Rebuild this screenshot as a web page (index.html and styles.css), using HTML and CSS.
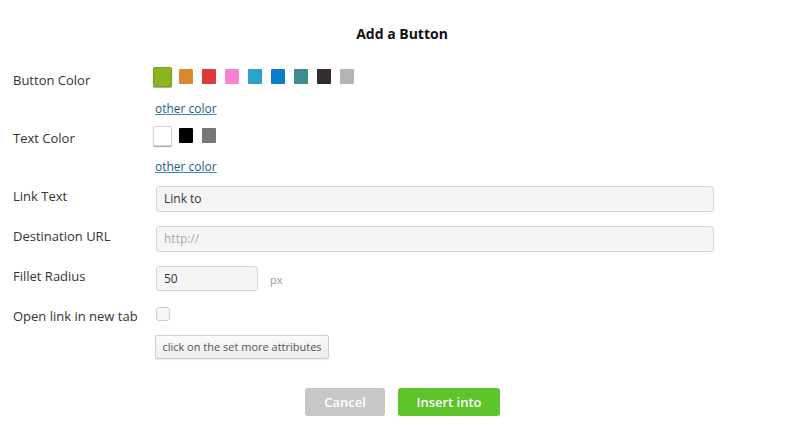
FILE: index.html
```html
<!DOCTYPE html>
<html>
<head>
<meta charset="utf-8">
<link rel="stylesheet" href="styles.css">
</head>
<body>
<div class="dialog">
  <h1 class="title">Add a Button</h1>

  <div class="row row-bcolor">
    <div class="label">Button Color</div>
    <div class="control">
      <div class="swatches">
        <span class="swatch selected" style="background:#8db31e"></span>
        <span class="swatch" style="background:#d8892c"></span>
        <span class="swatch" style="background:#da3a3a"></span>
        <span class="swatch" style="background:#f684d3"></span>
        <span class="swatch" style="background:#2aa4cd"></span>
        <span class="swatch" style="background:#0b7ccb"></span>
        <span class="swatch" style="background:#3f8c8f"></span>
        <span class="swatch" style="background:#332d31"></span>
        <span class="swatch" style="background:#b4b4b4"></span>
      </div>
      <a class="other" href="#">other color</a>
    </div>
  </div>

  <div class="row row-tcolor">
    <div class="label">Text Color</div>
    <div class="control">
      <div class="swatches">
        <span class="swatch selected white" style="background:#ffffff"></span>
        <span class="swatch" style="background:#000000"></span>
        <span class="swatch" style="background:#777777"></span>
      </div>
      <a class="other tight" href="#">other color</a>
    </div>
  </div>

  <div class="row row-field first-field">
    <div class="label">Link Text</div>
    <div class="control"><div class="input wide">Link to</div></div>
  </div>

  <div class="row row-field">
    <div class="label">Destination URL</div>
    <div class="control"><div class="input wide placeholder">http://</div></div>
  </div>

  <div class="row row-field">
    <div class="label">Fillet Radius</div>
    <div class="control inline"><div class="input small">50</div><span class="unit">px</span></div>
  </div>

  <div class="row row-check">
    <div class="label">Open link in new tab</div>
    <div class="control"><span class="checkbox"></span></div>
  </div>

  <div class="row row-more">
    <div class="label"></div>
    <div class="control"><button class="more">click on the set more attributes</button></div>
  </div>

  <div class="footer">
    <button class="btn cancel">Cancel</button>
    <button class="btn insert">Insert into</button>
  </div>
</div>
</body>
</html>
```

FILE: styles.css
```css
* { box-sizing: border-box; }
html, body { margin: 0; padding: 0; background: #ffffff; }
body {
  font-family: "Open Sans", "DejaVu Sans", sans-serif;
  color: #333333;
  width: 800px;
  height: 425px;
  overflow: hidden;
}
.dialog { padding: 24px 0 0 13px; }
.title {
  margin: 0 0 0 -13px;
  padding-left: 4px;
  font-size: 14px;
  font-weight: 700;
  line-height: 20px;
  text-align: center;
  color: #111111;
}
.row {
  display: grid;
  grid-template-columns: 142px 560px;
}
.label {
  font-size: 13px;
  line-height: 18px;
  color: #333333;
}
.row-bcolor { margin-top: 22px; }
.row-bcolor .label { padding-top: 5px; }
.row-tcolor .label { padding-top: 4px; }
.row-tcolor { margin-top: 8px; }
.swatches {
  display: flex;
  align-items: center;
  height: 21px;
  margin-left: -2px;
}
.swatch {
  display: block;
  width: 14px;
  height: 15px;
  margin-right: 9px;
  border-radius: 1px;
}
.swatch.selected {
  width: 19px;
  height: 20px;
  margin-right: 7px;
  border: 1px solid rgba(0,0,0,0.12);
  box-shadow: 0 1px 1px rgba(0,0,0,0.35);
  border-radius: 2px;
}
.swatch.white { border-color: #d4d4d4; }
.other {
  display: block;
  margin-top: 14px;
  font-size: 12px;
  line-height: 16px;
  color: #1d5d7e;
  text-decoration: underline;
  text-decoration-color: #3b8fb0;
  width: max-content;
}
.other.tight { margin-top: 13px; margin-bottom: 1px; }
.row-field { margin-top: 14px; }
.first-field { margin-top: 10px; }
.row-field .label { padding-top: 1px; }
.input {
  height: 26px;
  margin-left: 1px;
  border: 1px solid #d6d6d6;
  border-radius: 3px;
  background: #f5f5f5;
  font-size: 12px;
  line-height: 24px;
  padding-left: 7px;
  color: #333333;
}
.input.wide { width: 558px; }
.input.small { width: 102px; height: 25px; line-height: 23px; }
.input.placeholder { color: #aaaaaa; }
.inline { display: flex; align-items: center; }
.unit { margin-left: 12px; font-size: 11px; color: #999999; margin-top: 1px; }
.row-check { margin-top: 14px; }
.row-check .label { padding-top: 2px; }
.checkbox {
  display: block;
  width: 14px;
  height: 14px;
  margin: 2px 0 0 1px;
  border: 1px solid #cccccc;
  border-radius: 3px;
  background: #f7f7f7;
}
.row-more { margin-top: 10px; }
.more {
  display: block;
  width: 174px;
  height: 24px;
  margin: 0;
  padding: 0;
  border: 1px solid #cfcfcf;
  border-radius: 2px;
  background: linear-gradient(#fbfbfb, #ececec);
  box-shadow: 0 1px 1px rgba(0,0,0,0.08);
  font-family: "Open Sans", "DejaVu Sans", sans-serif;
  font-size: 11px;
  color: #555555;
  line-height: 20px;
}
.footer {
  display: flex;
  justify-content: center;
  gap: 13px;
  margin: 29px 0 0 -13px;
  padding-left: 5px;
}
.btn {
  height: 28px;
  border: 0;
  border-radius: 3px;
  color: #ffffff;
  font-family: "Open Sans", "DejaVu Sans", sans-serif;
  font-size: 13px;
  font-weight: 600;
  padding: 0;
}
.cancel { width: 80px; background: #c7c7c7; }
.insert { width: 102px; background: #5ec42b; }
```
